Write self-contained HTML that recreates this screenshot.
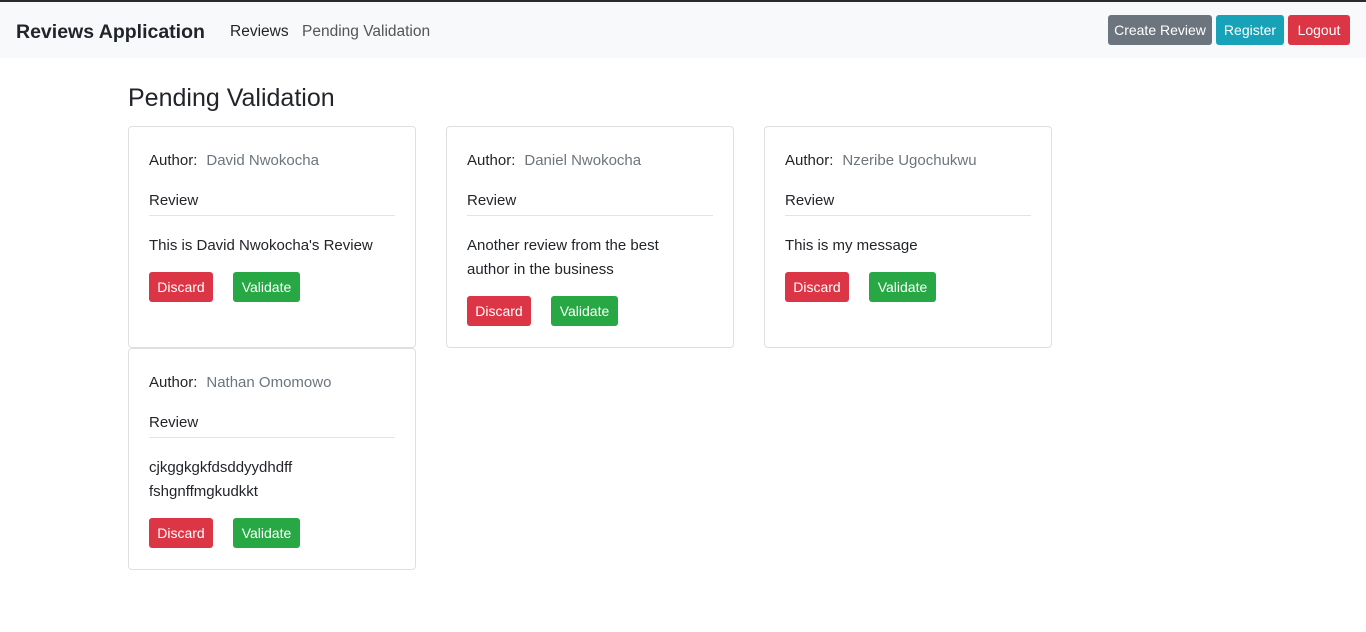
<!DOCTYPE html>
<html><head><style>
*{box-sizing:border-box;margin:0;padding:0}
body{width:1366px;height:632px;background:#fff;font-family:"Liberation Sans",sans-serif;color:#212529;position:relative;overflow:hidden}
.top{position:absolute;top:0;left:0;width:1366px;height:2px;background:#2b2b2b}
.nav{position:absolute;top:2px;left:0;width:1366px;height:56px;background:#f8f9fa}
.abs{position:absolute;white-space:nowrap}
.brand{left:16px;top:19px;font-size:19.5px;font-weight:bold;color:#212529}
.nl{top:21px;font-size:15.5px}
.btn{position:absolute;color:#fff;font-size:14px;border-radius:3px;text-align:center;line-height:30px;height:30px}
h1{position:absolute;left:128px;top:84px;font-size:25px;font-weight:normal}
.card{position:absolute;width:288px;height:222px;border:1px solid #dfdfdf;border-radius:4px}
.card .a{position:absolute;left:20px;top:25px;font-size:15px}
.card .a span{color:#6c757d;margin-left:9px}
.card .r{position:absolute;left:20px;top:65px;font-size:15px}
.card .hr{position:absolute;left:20px;top:88px;width:246px;height:1px;background:#e3e3e3}
.card .t{position:absolute;left:20px;top:107px;font-size:15px;line-height:24px;width:225px}
</style></head><body>
<div class="top"></div>
<div class="nav">
<div class="abs brand">Reviews Application</div>
<div class="abs nl" style="left:230px;color:#212529">Reviews</div>
<div class="abs nl" style="left:302px;color:#555">Pending Validation</div>
<div class="btn" style="left:1108px;top:13px;width:104px;background:#6c757d">Create Review</div>
<div class="btn" style="left:1216px;top:13px;width:68px;background:#17a2b8">Register</div>
<div class="btn" style="left:1288px;top:13px;width:62px;background:#dc3545">Logout</div>
</div>
<h1>Pending Validation</h1>

<div class="card" style="left:128px;top:126px">
<div class="a">Author:<span>David Nwokocha</span></div>
<div class="r">Review</div><div class="hr"></div>
<div class="t">This is David Nwokocha's Review</div>
<div class="btn" style="left:20px;top:145px;width:64px;background:#dc3545">Discard</div>
<div class="btn" style="left:104px;top:145px;width:67px;background:#28a745">Validate</div>
</div>

<div class="card" style="left:446px;top:126px">
<div class="a">Author:<span>Daniel Nwokocha</span></div>
<div class="r">Review</div><div class="hr"></div>
<div class="t">Another review from the best author in the business</div>
<div class="btn" style="left:20px;top:169px;width:64px;background:#dc3545">Discard</div>
<div class="btn" style="left:104px;top:169px;width:67px;background:#28a745">Validate</div>
</div>

<div class="card" style="left:764px;top:126px">
<div class="a">Author:<span>Nzeribe Ugochukwu</span></div>
<div class="r">Review</div><div class="hr"></div>
<div class="t">This is my message</div>
<div class="btn" style="left:20px;top:145px;width:64px;background:#dc3545">Discard</div>
<div class="btn" style="left:104px;top:145px;width:67px;background:#28a745">Validate</div>
</div>

<div class="card" style="left:128px;top:348px">
<div class="a">Author:<span>Nathan Omomowo</span></div>
<div class="r">Review</div><div class="hr"></div>
<div class="t">cjkggkgkfdsddyydhdff fshgnffmgkudkkt</div>
<div class="btn" style="left:20px;top:169px;width:64px;background:#dc3545">Discard</div>
<div class="btn" style="left:104px;top:169px;width:67px;background:#28a745">Validate</div>
</div>
</body></html>
